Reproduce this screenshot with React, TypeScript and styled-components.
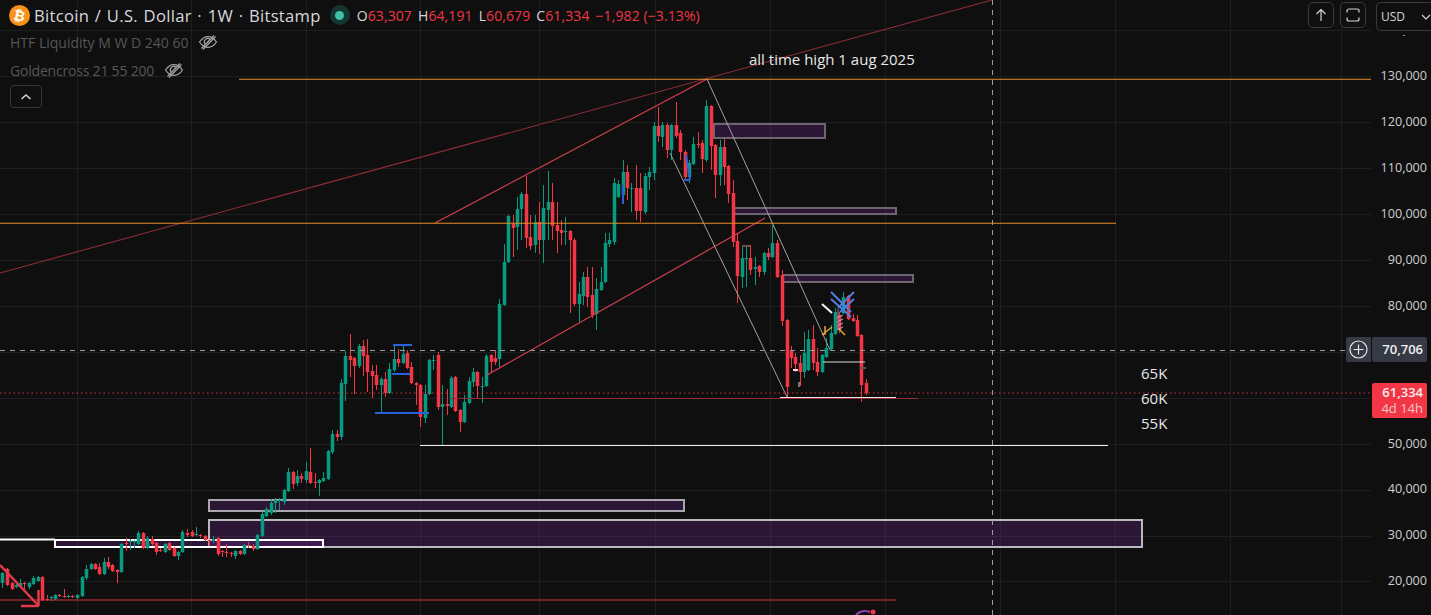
import React from "react";
import styled, { createGlobalStyle } from "styled-components";

const GREEN = "#089981";
const RED = "#f23645";

// x, body top, body bottom, high, low, up (all in screen pixels, the chart has no data source here)
type Candle = [number, number, number, number, number, number];
const candles: Candle[] = [
    [2,573,583,572,588,1],[7,569,585,568,586,0],[12,583,589,582,590,0],[16,585,587,584,588,1],[20,583,587,579,588,1],
    [24,583,584,582,590,0],[29,583,587,582,589,1],[33,578,584,576,585,1],[38,577,581,576,582,1],[42,577,600,576,601,0],
    [47,599,600,595,601,0],[51,597,598,596,601,1],[55,595,599,594,600,1],[59,595,596,594,597,0],[64,596,597,589,598,0],
    [68,596,597,595,598,1],[72,596,597,595,598,0],[77,595,598,594,599,1],[82,577,596,576,597,1],[86,569,578,565,580,1],
    [91,564,569,563,570,1],[95,564,569,563,570,0],[99,567,574,563,575,0],[104,562,574,558,575,1],[108,562,567,557,569,0],
    [112,565,571,564,572,0],[117,570,572,569,583,0],[121,544,572,543,573,1],[126,543,544,538,551,0],[130,541,542,539,550,1],
    [134,541,542,540,548,1],[138,533,544,531,545,1],[143,533,548,532,549,0],[147,538,548,536,549,1],[152,539,544,536,546,0],
    [156,543,552,542,555,0],[160,550,551,548,552,0],[165,544,552,543,553,1],[169,543,550,542,551,0],[174,548,556,547,557,0],
    [178,552,556,551,560,1],[182,532,552,530,553,1],[187,533,535,529,537,0],[192,532,536,530,537,0],[196,534,535,527,536,1],
    [200,535,536,534,538,0],[205,536,540,535,541,0],[209,540,541,539,546,0],[213,539,541,536,543,1],[218,538,554,537,556,0],
    [222,551,552,550,557,0],[226,552,553,544,557,0],[231,553,554,552,557,0],[235,551,556,550,559,1],[240,551,554,550,555,0],
    [244,545,554,544,555,1],[248,545,546,542,548,0],[253,546,549,544,551,0],[257,535,549,534,550,1],[262,514,536,511,537,1],
    [266,509,516,507,517,1],[271,503,513,499,515,1],[275,500,503,498,513,1],[279,500,501,498,510,1],[284,490,502,489,505,1],
    [288,472,491,468,492,1],[293,472,484,471,489,0],[297,476,483,470,486,1],[301,476,479,473,483,0],[306,471,480,462,483,1],
    [310,472,483,448,484,0],[315,482,483,473,488,0],[319,480,483,479,496,1],[323,478,481,472,482,1],[328,451,479,450,480,1],
    [332,434,452,430,454,1],[337,434,437,430,441,0],[341,383,437,379,440,1],[345,356,384,351,401,1],[350,356,360,334,377,0],
    [354,358,366,357,394,0],[359,346,366,344,368,1],[363,346,356,340,376,0],[367,355,372,339,392,0],[372,371,376,365,398,0],
    [376,375,385,365,390,0],[381,379,385,377,413,1],[385,379,393,372,397,0],[389,369,393,363,394,1],[394,359,370,344,372,1],
    [398,359,363,349,367,0],[403,354,363,344,364,1],[407,353,368,350,369,0],[411,367,383,362,384,0],[416,383,385,382,405,0],
    [420,385,417,384,427,0],[425,394,418,385,423,1],[429,360,394,359,395,1],[433,360,361,355,370,1],[438,355,407,352,410,0],
    [442,404,407,385,445,1],[447,404,406,389,415,0],[451,378,407,376,408,1],[455,377,411,376,412,0],[460,410,422,409,432,0],
    [464,402,422,395,423,1],[469,381,403,377,404,1],[473,372,382,368,387,1],[477,372,386,371,398,0],[482,386,387,377,403,1],
    [486,356,386,354,387,1],[491,355,362,354,372,0],[495,358,362,350,365,0],[499,304,359,299,367,1],[504,262,305,244,306,1],
    [508,216,262,215,263,1],[513,224,228,215,257,0],[517,209,227,197,250,1],[521,194,209,192,240,1],[526,194,238,176,248,0],
    [530,237,246,215,250,0],[535,222,245,215,253,1],[539,222,240,202,254,0],[543,208,240,185,263,1],[548,202,210,171,240,1],
    [552,202,226,183,240,0],[557,225,231,202,253,0],[561,230,233,220,245,0],[565,231,232,217,245,1],[570,231,240,230,313,0],
    [574,240,304,238,306,0],[579,294,304,282,322,1],[583,277,296,272,305,1],[587,277,297,267,307,0],[592,295,315,267,318,0],
    [596,289,314,278,330,1],[601,282,290,267,291,1],[605,243,282,233,283,1],[609,240,244,233,247,1],[614,183,242,178,245,1],
    [618,184,197,180,198,1],[623,172,195,160,196,1],[627,172,188,165,200,0],[631,188,189,183,212,1],[636,188,211,165,220,0],
    [640,188,211,173,222,0],[645,176,212,173,214,1],[649,172,177,167,190,1],[654,126,173,122,180,1],[658,126,136,107,142,0],
    [662,125,137,122,147,1],[667,125,150,123,158,0],[671,125,150,124,160,1],[676,125,136,102,138,0],[680,133,152,130,160,0],
    [685,152,177,150,180,0],[689,163,177,160,183,1],[693,144,164,137,165,1],[698,144,145,132,148,0],[702,143,159,140,173,0],
    [706,106,160,100,162,1],[711,106,146,105,170,0],[715,145,175,144,198,0],[720,147,175,140,186,1],[724,147,167,139,185,0],
    [728,166,194,165,203,0],[733,193,242,180,247,0],[737,241,276,233,303,0],[742,258,277,247,288,1],[746,258,259,247,287,1],
    [750,258,270,245,275,0],[755,267,269,257,285,1],[759,266,272,265,277,0],[764,253,272,252,275,1],[768,253,257,248,260,0],
    [772,243,257,225,258,1],[777,243,277,240,278,0],[782,275,321,270,326,0],[787,320,387,319,397,0],[791,351,358,346,368,0],
    [795,357,364,353,372,0],[800,363,372,355,386,0],[804,353,372,332,378,1],[808,339,370,330,371,1],[813,339,363,325,370,0],
    [817,362,372,348,376,0],[822,355,372,354,373,1],[826,348,357,338,358,1],[831,333,349,325,350,1],[835,312,334,308,335,1],
    [839,315,330,312,333,0],[843,297,313,292,314,1],[848,296,319,295,320,0],[853,318,321,314,322,0],[857,320,336,315,337,0],
    [861,335,385,334,402,0],[866,383,393,379,395,0],
];

const gridX = [77, 191, 306, 420, 539, 655, 770, 885, 1000, 1115, 1230, 1341];
const gridY = [30, 76, 122, 168, 214, 260, 306, 352, 398, 444, 490, 536, 581];
// 70,000 and 60,000 sit behind the crosshair and last price tags
const axisPrices = ["130,000", "120,000", "110,000", "100,000", "90,000", "80,000", "", "", "50,000", "40,000", "30,000", "20,000"];

const GlobalStyle = createGlobalStyle`
    html, body {
        margin: 0;
        padding: 0;
        background: #0f0f0f;
        overflow: hidden;
    }
    * {
        box-sizing: border-box;
    }
`;

const Shell = styled.div`
    display: flex;
    width: 1431px;
    height: 615px;
    background: #0f0f0f;
    font-family: "Open Sans", "Liberation Sans", sans-serif;
    overflow: hidden;
    position: relative;
`;

const Pane = styled.div`
    position: relative;
    flex: 0 0 1371px;
    height: 100%;
`;

const ChartSvg = styled.svg`
    display: block;
    width: 1371px;
    height: 615px;
`;

const Legend = styled.div`
    position: absolute;
    left: 0;
    top: 0;
    display: flex;
    flex-direction: column;
    padding-left: 9px;
`;

const TitleRow = styled.div`
    display: flex;
    align-items: center;
    height: 30px;
    margin-bottom: -2px;
    white-space: nowrap;
`;

const Title = styled.span`
    margin-left: 4px;
    font-size: 16.6px;
    font-weight: 500;
    letter-spacing: 0.3px;
    word-spacing: 1px;
    color: #d6d8de;
`;

const StatusDot = styled.span`
    display: flex;
    align-items: center;
    justify-content: center;
    width: 20px;
    height: 20px;
    margin-left: 9px;
    border-radius: 50%;
    background: #163531;
    &::after {
        content: "";
        width: 9px;
        height: 9px;
        border-radius: 50%;
        background: #3fc2a6;
    }
`;

const Ohlc = styled.div`
    display: flex;
    margin-left: 7px;
    font-size: 14px;
    letter-spacing: 0.1px;
    gap: 6px;
`;

const OhlcItem = styled.span`
    color: #d6d8de;
    & > b {
        font-weight: 400;
        color: ${RED};
    }
`;

const StudyRow = styled.div<{ $tight?: boolean }>`
    display: flex;
    align-items: center;
    height: 28px;
    padding-left: 1px;
    font-size: 14px;
    letter-spacing: ${(p) => (p.$tight ? "-0.2px" : "0")};
    color: #565656;
    white-space: nowrap;
`;

const EyeIcon = styled.svg`
    width: 20px;
    height: 20px;
    margin-left: 10px;
    color: #a6a6a6;
`;

const Collapse = styled.button`
    display: flex;
    align-items: center;
    justify-content: center;
    width: 32px;
    height: 23px;
    margin: 1px 0 0 1px;
    padding: 0;
    background: #0f0f0f;
    border: 1px solid #383838;
    border-radius: 4px;
    color: #d6d6d6;
`;

const Note = styled.span<{ $x: number; $y: number }>`
    position: absolute;
    left: ${(p) => p.$x}px;
    top: ${(p) => p.$y}px;
    font-size: 15px;
    font-weight: 500;
    line-height: 18px;
    color: #e8e8e8;
    white-space: nowrap;
`;

const TopTools = styled.div`
    position: absolute;
    top: 2px;
    right: 0;
    display: flex;
    align-items: flex-start;
    gap: 6px;
`;

const ToolButton = styled.button`
    display: flex;
    align-items: center;
    justify-content: center;
    width: 26px;
    height: 26px;
    padding: 0;
    background: #0f0f0f;
    border: 1px solid #3a3a3a;
    border-radius: 5px;
    color: #d6d6d6;
`;

const CurrencySelect = styled.div`
    display: flex;
    align-items: center;
    justify-content: space-between;
    width: 55px;
    height: 29px;
    margin-left: 4px;
    padding: 0 0 0 4px;
    background: #0f0f0f;
    border: 1px solid #3a3a3a;
    border-right: none;
    border-radius: 5px 0 0 5px;
    font-size: 12px;
    color: #d6d6d6;
`;

const PriceAxis = styled.div`
    flex: 1;
    display: flex;
    flex-direction: column;
    padding-top: 53px;
    padding-right: 4px;
`;

const AxisLabel = styled.div`
    display: flex;
    align-items: center;
    justify-content: flex-end;
    flex: 0 0 45.9px;
    font-size: 12.6px;
    color: #d0d0d0;
`;

const AxisSpeck = styled.span`
    position: absolute;
    left: 1403px;
    top: 35px;
    width: 2px;
    height: 1px;
    background: #8c8c8c;
`;

const CrossPlus = styled.div`
    position: absolute;
    left: 1346px;
    top: 337px;
    display: flex;
    align-items: center;
    justify-content: center;
    width: 25px;
    height: 25px;
    background: #363a45;
    border-radius: 2px 0 0 2px;
`;

const PriceTag = styled.div<{ $top: number; $bg: string; $single?: boolean }>`
    position: absolute;
    left: 1372px;
    top: ${(p) => p.$top}px;
    width: 55px;
    padding: 2px 4px;
    border-radius: 2px;
    background: ${(p) => p.$bg};
    font-size: 13px;
    font-weight: 600;
    line-height: ${(p) => (p.$single ? "21px" : "15.500px")};
    text-align: right;
    color: #f0f0f0;
`;

const Countdown = styled.div`
    font-weight: 400;
    color: #f6c6cb;
`;

const EyeOff = () => (
    <EyeIcon viewBox="0 0 20 20" fill="none" stroke="currentColor" strokeWidth="1.2">
        <path d="M1.5 10c2.4-3.6 5.2-5.4 8.5-5.4s6.1 1.8 8.5 5.4c-2.4 3.6-5.2 5.4-8.5 5.4s-6.1-1.800-8.500-5.400z" />
        <path d="M7.200 12.100a3.400 3.400 0 0 1 4.900-4.700" />
        <path d="M3.500 16.500 16 3.500M5 17.500 17.500 4.500" />
    </EyeIcon>
);

const BitcoinLogo = () => (
    <svg width="21" height="21" viewBox="0 0 21 21">
        <circle cx="10.500" cy="10.500" r="10.500" fill="#f7931a" />
        <text x="10.500" y="15.500" textAnchor="middle" fontSize="14" fontWeight="700" fontFamily="DejaVu Sans, sans-serif" fill="#fff" transform="rotate(12 10.500 10.500)">₿</text>
    </svg>
);

// rectangle drawings on the chart (zones), fill is see-through so overlaps go darker purple
const Zone = (z: { x: number; y: number; w: number; h: number; stroke?: string; sw?: number }) => (
    <rect x={z.x} y={z.y} width={z.w} height={z.h} fill="#7b2fa0" fillOpacity="0.27" stroke={z.stroke || "#aaa6ae"} strokeWidth={z.sw || 2} />
);

const Candles = () => (
    <g>
        {candles.map(([x, t, b, h, l, up]) => {
            const c = up ? GREEN : RED;
            return (
                <g key={x} fill={c}>
                    <rect x={x} y={h} width={1} height={l - h} />
                    <rect x={x - 1.25} y={t} width={3.5} height={Math.max(b - t, 1)} />
                </g>
            );
        })}
    </g>
);

const Drawings = () => (
    <g fill="none">
        {/* channel and trend lines */}
        <line x1="0" y1="273" x2="992" y2="0" stroke="#8f2c37" strokeWidth="1.100" />
        <line x1="435" y1="223" x2="707" y2="79" stroke="#d8404e" strokeWidth="1.150" />
        <line x1="487" y1="375" x2="765" y2="218" stroke="#d8404e" strokeWidth="1.150" />
        <line x1="707" y1="79" x2="830" y2="350" stroke="#a5a1a1" />
        <line x1="670" y1="153" x2="787" y2="397" stroke="#a5a1a1" />
        <line x1="239" y1="79.300" x2="1371" y2="79.300" stroke="#ea9030" strokeWidth="1.100" />
        <line x1="0" y1="223.300" x2="1116" y2="223.300" stroke="#e88e22" strokeWidth="1.100" />
        <line x1="0" y1="600" x2="896" y2="600" stroke="#d83341" strokeWidth="1.150" />
        <line x1="450" y1="398.500" x2="918" y2="398.500" stroke="#8f2c37" strokeWidth="1.100" />
        <line x1="780" y1="397.500" x2="896" y2="397.500" stroke="#f0e6e6" />
        <line x1="420" y1="445.500" x2="1108" y2="445.500" stroke="#ededed" />
        <line x1="823" y1="362" x2="865" y2="362" stroke="#dddddd" />
        <line x1="861" y1="368" x2="866" y2="368" stroke="#555555" strokeWidth="2" />
        <line x1="793" y1="370" x2="798" y2="370" stroke="#f0d8d8" strokeWidth="2" />
        <line x1="799" y1="382" x2="799" y2="387" stroke="#f0d8d8" />
        <line x1="742" y1="246" x2="750" y2="246" stroke="#c98f8f" />
        {/* down arrow, bottom left */}
        <g stroke="#e23a4b" strokeWidth="2.500">
            <line x1="0" y1="565" x2="38" y2="605" />
            <line x1="21" y1="606" x2="39" y2="606" />
            <line x1="38.500" y1="590" x2="38.500" y2="606" />
        </g>
        {/* blue range markers */}
        <g stroke="#2962d8" strokeWidth="2">
            <line x1="393" y1="345" x2="412" y2="345" />
            <line x1="392" y1="374" x2="410" y2="374" />
            <line x1="375" y1="413" x2="429" y2="413" />
            <line x1="686" y1="155" x2="690" y2="180" />
            <line x1="684" y1="180" x2="689" y2="180" />
            <line x1="623" y1="185" x2="623" y2="204" />
        </g>
        {/* cluster around the last swing */}
        <g stroke="#4f7fe0" strokeWidth="2">
            <line x1="831" y1="292" x2="851" y2="312" />
            <line x1="831" y1="299" x2="851" y2="317" />
            <line x1="854" y1="292" x2="838" y2="308" />
            <line x1="854" y1="299" x2="840" y2="312" />
        </g>
        <line x1="822" y1="304" x2="832" y2="313" stroke="#f5f5f5" strokeWidth="2" />
        <g stroke="#e8a92f" strokeWidth="1.500">
            <line x1="822" y1="335" x2="832" y2="327" />
            <line x1="838" y1="328" x2="845" y2="335" />
            <line x1="825" y1="326" x2="825" y2="335" />
        </g>
        <g stroke="#b5b0b0">
            <line x1="837" y1="318" x2="843" y2="315" />
            <line x1="837" y1="322" x2="843" y2="319" />
            <line x1="837" y1="326" x2="843" y2="323" />
            <line x1="837" y1="330" x2="843" y2="327" />
        </g>
        <line x1="838" y1="309" x2="838" y2="330" stroke="#c06aa8" />
        {/* current price and crosshair */}
        <line x1="0" y1="393" x2="1371" y2="393" stroke={RED} strokeWidth="1.200" strokeOpacity="0.85" strokeDasharray="1.500 3" />
        <line x1="0" y1="350.500" x2="1346" y2="350.500" stroke="#9c9c9c" strokeDasharray="5 5" />
        <line x1="992.500" y1="0" x2="992.500" y2="615" stroke="#9c9c9c" strokeDasharray="5 5" />
        {/* indicator mark at the bottom */}
        <path d="M856 615c3-3 8-5 14-3" stroke="#8e3fa8" strokeWidth="2" />
        <circle cx="873" cy="612" r="2.500" fill={RED} />
    </g>
);

const App = (): JSX.Element => {
    return (
        <Shell>
            <GlobalStyle />
            <Pane>
                <ChartSvg viewBox="0 0 1371 615">
                    <g stroke="#1e1e1e">
                        {gridX.map((x) => <line key={x} x1={x + 0.5} y1="0" x2={x + 0.5} y2="615" />)}
                        {gridY.map((y) => <line key={y} x1="0" y1={y + 0.5} x2="1371" y2={y + 0.5} />)}
                    </g>
                    <Zone x={714} y={124} w={111} h={14} stroke="#6d6570" />
                    <Zone x={734} y={208} w={162} h={6} stroke="#6d6570" />
                    <Zone x={783} y={275} w={130} h={7} stroke="#6d6570" />
                    <Zone x={209} y={500} w={475} h={11} />
                    <Zone x={209} y={520} w={933} h={27} stroke="#bcb8bf" />
                    <Zone x={55} y={540} w={268} h={7} stroke="#fff" />
                    <line x1="0" y1="539.500" x2="55" y2="539.500" stroke="#fff" strokeWidth="2" />
                    <Candles />
                    <Drawings />
                </ChartSvg>
                <Legend>
                    <TitleRow>
                        <BitcoinLogo />
                        <Title>Bitcoin / U.S. Dollar · 1W · Bitstamp</Title>
                        <StatusDot />
                        <Ohlc>
                            <OhlcItem>O<b>63,307</b></OhlcItem>
                            <OhlcItem>H<b>64,191</b></OhlcItem>
                            <OhlcItem>L<b>60,679</b></OhlcItem>
                            <OhlcItem>C<b>61,334</b></OhlcItem>
                            <OhlcItem><b>−1,982 (−3.13%)</b></OhlcItem>
                        </Ohlc>
                    </TitleRow>
                    <StudyRow>HTF Liquidity M W D 240 60<EyeOff /></StudyRow>
                    <StudyRow $tight>Goldencross 21 55 200<EyeOff /></StudyRow>
                    <Collapse>
                        <svg width="12" height="8" viewBox="0 0 12 8" fill="none" stroke="currentColor" strokeWidth="1.500">
                            <path d="M1.500 6 6 2l4.500 4" />
                        </svg>
                    </Collapse>
                </Legend>
                <Note $x={749} $y={50}>all time high 1 aug 2025</Note>
                <Note $x={1141} $y={364}>65K</Note>
                <Note $x={1141} $y={389}>60K</Note>
                <Note $x={1141} $y={414}>55K</Note>
            </Pane>
            <PriceAxis>
                {axisPrices.map((p, i) => <AxisLabel key={i}>{p}</AxisLabel>)}
            </PriceAxis>
            <AxisSpeck />
            <TopTools>
                <ToolButton>
                    <svg width="14" height="14" viewBox="0 0 14 14" fill="none" stroke="currentColor" strokeWidth="1.200">
                        <path d="M7 13V1.500M2.500 6 7 1.500 11.500 6" />
                    </svg>
                </ToolButton>
                <ToolButton>
                    <svg width="16" height="16" viewBox="0 0 16 16" fill="none" stroke="currentColor" strokeWidth="1.200">
                        <path d="M2 5.500V4a2 2 0 0 1 2-2h8a2 2 0 0 1 2 2v1.500M2 10.500V12a2 2 0 0 0 2 2h8a2 2 0 0 0 2-2v-1.500" />
                    </svg>
                </ToolButton>
                <CurrencySelect>
                    USD
                    <svg width="10" height="6" viewBox="0 0 10 6" fill="none" stroke="currentColor" strokeWidth="1.200">
                        <path d="M1 1l4 4 4-4" />
                    </svg>
                </CurrencySelect>
            </TopTools>
            <CrossPlus>
                <svg width="19" height="19" viewBox="0 0 19 19" fill="none" stroke="#e6e6e6" strokeWidth="1.200">
                    <circle cx="9.500" cy="9.500" r="8.500" />
                    <path d="M9.500 4.500v10M4.500 9.500h10" />
                </svg>
            </CrossPlus>
            <PriceTag $top={337} $bg="#363a45" $single>70,706</PriceTag>
            <PriceTag $top={383} $bg={RED}>
                61,334
                <Countdown>4d 14h</Countdown>
            </PriceTag>
        </Shell>
    );
};

export default App;
